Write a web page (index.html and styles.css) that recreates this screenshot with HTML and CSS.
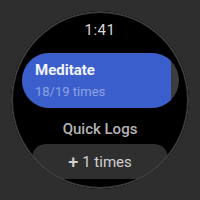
FILE: index.html
```html
<!DOCTYPE html>
<html>
<head>
<meta charset="utf-8">
<link rel="stylesheet" href="styles.css">
</head>
<body>
<div class="watch">
  <div class="time">1:41</div>
  <div class="card">
    <div class="fill" style="width:94.7%"></div>
    <div class="card-text">
      <div class="title">Meditate</div>
      <div class="sub">18/19 times</div>
    </div>
  </div>
  <div class="section">Quick Logs</div>
  <div class="chip"><span class="plus">+</span> 1 times</div>
</div>
</body>
</html>
```
FILE: styles.css
```css
html, body {
  margin: 0;
  padding: 0;
  width: 200px;
  height: 200px;
  background: #2e2e2e;
  overflow: hidden;
  font-family: Roboto, "Liberation Sans", sans-serif;
}
.watch {
  position: relative;
  width: 178px;
  height: 178px;
  margin: 11px auto 0;
  border-radius: 50%;
  background: #000;
  overflow: hidden;
  display: flex;
  flex-direction: column;
  align-items: center;
}
.watch::after {
  content: "";
  position: absolute;
  inset: 0;
  border-radius: 50%;
  box-shadow: inset 0 0 0 2px #3c3c3c;
  pointer-events: none;
}
.time {
  margin-top: 10px;
  font-size: 15px;
  line-height: 18px;
  color: #d6d6d6;
  letter-spacing: 0.5px;
}
.card {
  position: relative;
  margin-top: 14px;
  margin-left: 1px;
  width: 157px;
  height: 55px;
  border-radius: 28px;
  background: #3d3d3d;
  overflow: hidden;
  flex-shrink: 0;
}
.fill {
  position: absolute;
  left: 0;
  top: 0;
  bottom: 0;
  background: #3a5fcd;
}
.card-text {
  position: relative;
  padding: 8px 0 0 13px;
}
.title {
  font-size: 15px;
  line-height: 18px;
  font-weight: 700;
  color: #f2f4fb;
}
.sub {
  margin-top: 4px;
  font-size: 13px;
  line-height: 18px;
  color: #8fa2e2;
}
.section {
  margin-top: 12px;
  font-size: 15px;
  line-height: 18px;
  font-weight: 500;
  color: #b4b4b4;
}
.chip {
  margin-top: 6px;
  width: 136px;
  height: 35px;
  border-radius: 14px;
  background: #2f2f2f;
  display: flex;
  align-items: center;
  justify-content: center;
  font-size: 15px;
  color: #d0d0d0;
  flex-shrink: 0;
}
.plus {
  font-size: 18px;
  margin-right: 4px;
  font-weight: 500;
}
```
